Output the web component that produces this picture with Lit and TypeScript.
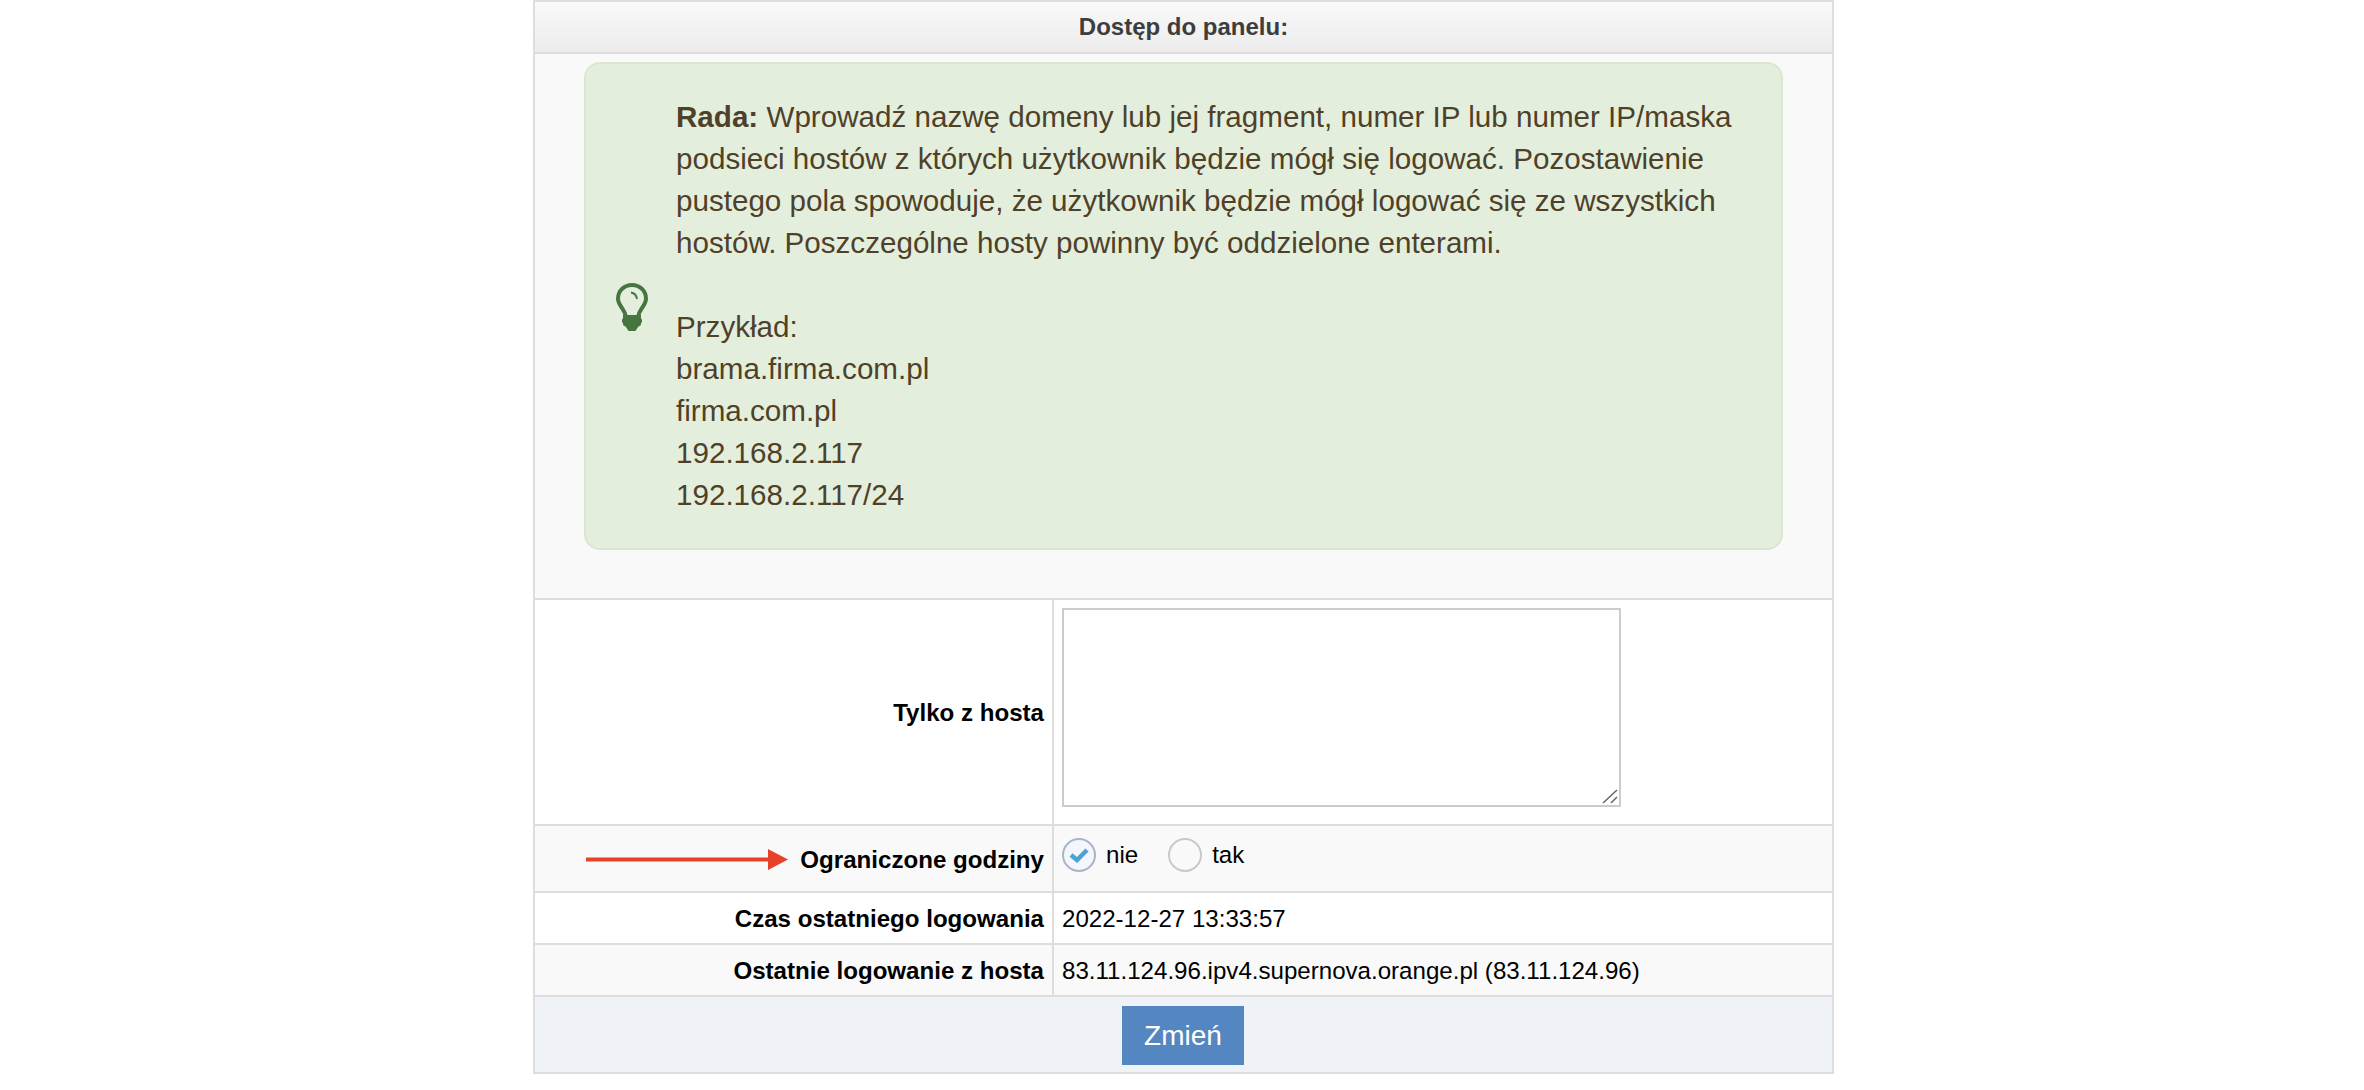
import { LitElement, html, css } from 'lit';
import { customElement } from 'lit/decorators.js';

@customElement('app-root')
export class AppRoot extends LitElement {
  static styles = css`
    :host {
      display: block;
      font-family: 'Liberation Sans', Arial, sans-serif;
      color: #000;
      background: #fff;
      height: 1090px;
      overflow: hidden;
    }
    .panel {
      box-sizing: border-box;
      width: 1301px;
      margin-left: 533px;
      border: 2px solid #ddd;
    }
    .head {
      height: 52px;
      box-sizing: border-box;
      border-bottom: 2px solid #ddd;
      background: linear-gradient(#f9f9f9, #ececec);
      color: #3d3d3d;
      font-size: 24px;
      font-weight: bold;
      display: flex;
      align-items: center;
      justify-content: center;
    }
    .tip-area {
      background: #f9f9f9;
      padding: 8px 49px 48px 49px;
      border-bottom: 2px solid #ddd;
    }
    .tip {
      display: flex;
      align-items: center;
      border: 2px solid #d9e8cc;
      border-radius: 16px;
      background: #e3efdc;
      padding: 33px 30px 31px 30px;
      color: #4f4129;
      font-size: 29.6px;
      line-height: 42px;
    }
    .tip-text {
      margin-top: -1px;
      margin-bottom: 1px;
    }
    .bulb {
      width: 32px;
      height: 48px;
      flex: none;
      margin-right: 28px;
    }
    .row {
      display: flex;
      border-bottom: 2px solid #ddd;
    }
    .row.alt {
      background: #f9f9f9;
    }
    .label {
      position: relative;
      box-sizing: border-box;
      width: 519px;
      flex: none;
      border-right: 2px solid #ddd;
      padding: 2px 8px 0 0;
      display: flex;
      align-items: center;
      justify-content: flex-end;
      font-size: 24.1px;
      font-weight: bold;
    }
    .value {
      flex: 1;
      padding: 2px 0 0 8px;
      display: flex;
      align-items: center;
      font-size: 24.1px;
    }
    .row-host { height: 224px; }
    .row-host .value { align-items: flex-start; padding-top: 8px; }
    .row-hours { height: 65px; }
    .row-info { height: 50px; }
    .field {
      position: relative;
      width: 559px;
      height: 199px;
    }
    textarea {
      box-sizing: border-box;
      width: 100%;
      height: 100%;
      margin: 0;
      border: 2px solid #ccc;
      background: #fff;
      resize: none;
      display: block;
    }
    .grip {
      position: absolute;
      right: 3px;
      bottom: 3px;
      width: 16px;
      height: 15px;
    }
    .arrow {
      position: absolute;
      left: 51px;
      top: 23px;
      width: 202px;
      height: 21px;
    }
    .radios {
      display: flex;
      align-items: center;
      margin-top: -9px;
    }
    .radio {
      box-sizing: border-box;
      width: 34px;
      height: 34px;
      border-radius: 50%;
      border: 2px solid #c9c9c9;
      margin-right: 10px;
      display: flex;
      align-items: center;
      justify-content: center;
    }
    .radio.on {
      border-color: #a9b6c3;
      background: #f3f6fb;
    }
    .radio svg {
      width: 20px;
      height: 16px;
    }
    .radio-text {
      margin-right: 30px;
    }
    .foot {
      height: 75px;
      background: #eff3f8;
      display: flex;
      justify-content: center;
      padding-top: 9px;
      box-sizing: border-box;
    }
    button {
      width: 122px;
      height: 59px;
      border: none;
      background: #5487c1;
      color: #fff;
      font: 28px 'Liberation Sans', Arial, sans-serif;
      padding: 0;
      margin-right: 1px;
    }
  `;

  render() {
    return html`
      <div class="panel">
        <div class="head">Dostęp do panelu:</div>
        <div class="tip-area">
          <div class="tip">
            <svg class="bulb" viewBox="0 0 32 48">
              <path d="M16 2C8 2 2 8 2 15.500C2 19.500 4 22 6 25C8 28 9.500 30 10 34L22 34C22.500 30 24 28 26 25C28 22 30 19.500 30 15.500C30 8 24 2 16 2Z" fill="none" stroke="#467540" stroke-width="4"/>
              <path d="M7 32H25V35.500L26 36.500V39L25 40V42L22 44L19.500 48H12.500L10 44L7 42V40L6 39V36.500L7 35.500Z" fill="#467540"/>
              <path d="M15 9.500C18 10 20.500 12.500 21 16" fill="none" stroke="#467540" stroke-width="2"/>
            </svg>
            <div class="tip-text">
              <b>Rada:</b> Wprowadź nazwę domeny lub jej fragment, numer IP lub numer IP/maska podsieci hostów z których użytkownik będzie mógł się logować. Pozostawienie pustego pola spowoduje, że użytkownik będzie mógł logować się ze wszystkich hostów. Poszczególne hosty powinny być oddzielone enterami.<br /><br />
              Przykład:<br />
              brama.firma.com.pl<br />
              firma.com.pl<br />
              192.168.2.117<br />
              192.168.2.117/24
            </div>
          </div>
        </div>
        <div class="row row-host">
          <div class="label">Tylko z hosta</div>
          <div class="value">
            <div class="field">
              <textarea></textarea>
              <svg class="grip" viewBox="0 0 16 15">
                <path d="M1 14L15 1M9 14L15 8" fill="none" stroke="#666" stroke-width="1.500"/>
              </svg>
            </div>
          </div>
        </div>
        <div class="row row-hours alt">
          <div class="label">
            <svg class="arrow" viewBox="0 0 202 21">
              <rect x="0" y="8.500" width="184" height="4" fill="#e8412a"/>
              <path d="M182 0L202 10.500L182 21Z" fill="#e8412a"/>
            </svg>
            Ograniczone godziny
          </div>
          <div class="value">
            <div class="radios">
              <span class="radio on">
                <svg viewBox="0 0 20 16">
                  <path d="M2 8L8 13L18 3" fill="none" stroke="#4ba3d4" stroke-width="4.500"/>
                </svg>
              </span>
              <span class="radio-text">nie</span>
              <span class="radio"></span>
              <span>tak</span>
            </div>
          </div>
        </div>
        <div class="row row-info">
          <div class="label">Czas ostatniego logowania</div>
          <div class="value">2022-12-27 13:33:57</div>
        </div>
        <div class="row row-info alt">
          <div class="label">Ostatnie logowanie z hosta</div>
          <div class="value">83.11.124.96.ipv4.supernova.orange.pl (83.11.124.96)</div>
        </div>
        <div class="foot"><button>Zmień</button></div>
      </div>
    `;
  }
}
